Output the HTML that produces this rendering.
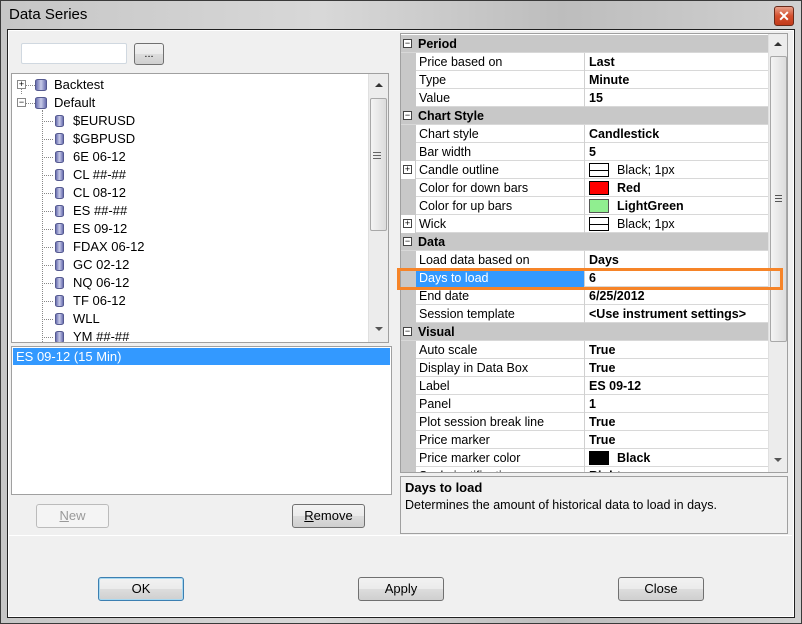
<!DOCTYPE html>
<html><head><style>
*{box-sizing:border-box;margin:0;padding:0}
body{width:802px;height:624px;overflow:hidden;background:#b4b4b4;font-family:"Liberation Sans",sans-serif;font-size:12.5px;color:#000;position:relative}
.abs{position:absolute}
.win{left:0;top:0;width:802px;height:624px;border:1px solid #3a3a3a;background:linear-gradient(90deg,#c6c6c6,#d8d8d8 40%,#bdbdbd 70%,#d0d0d0)}
.client{left:7px;top:29px;width:788px;height:589px;background:#f0f0f0;border:1px solid #202020;box-shadow:inset 0 0 0 1px #fff}
.btn{border:1px solid #707070;border-radius:3px;background:linear-gradient(#f2f2f2,#ebebeb 50%,#dddddd 50%,#cfcfcf);text-align:center;font-size:13px;line-height:21px}
.tree div{position:absolute;height:18px;line-height:18px;white-space:nowrap}
.db{position:absolute;top:3px;width:9px;height:12px;border-radius:3px/2px;background:linear-gradient(90deg,#6a6fb0,#c8cbe8 50%,#6a6fb0);border:1px solid #555a90}
.dots{position:absolute;top:9px;height:1px;border-top:1px dotted #888}
.tg{position:absolute;top:4px;left:5px;width:9px;height:9px;border:1px solid #888;font-size:9px;line-height:7px;text-align:center;background:#fff}
.pg{left:400px;top:33px;width:388px;height:440px;border:1px solid #a0a0a0;background:#fff;overflow:hidden}
.pr{position:absolute;left:0;width:367px;height:18px;line-height:19px;border-bottom:1px solid #d8d8d8}
.pr .n{position:absolute;left:14px;width:170px;height:18px;padding-left:3px;border-left:1px solid #c8c8c8;border-right:1px solid #d0d0d0}
.pr .v{position:absolute;left:185px;padding-left:3px;font-weight:bold;white-space:nowrap}
.pr.c{background:#c8c8c8;font-weight:bold}
.pr.c .n{border:none;left:14px}
.gut{position:absolute;left:0;top:0;width:14px;height:18px;background:#c8c8c8}
.pm{position:absolute;left:2px;top:4px;width:9px;height:9px;border:1px solid #444;font-size:9px;line-height:7px;text-align:center;font-weight:normal;background:#fff}
.sw{display:inline-block;width:20px;height:14px;border:1px solid #000;vertical-align:-3px;margin-right:8px}
</style></head><body>
<div class="abs win"></div>
<div class="abs" style="left:9px;top:6px;font-size:15px">Data Series</div>
<div class="abs" style="left:774px;top:6px;width:20px;height:20px;border:1px solid #6a2a1a;border-radius:3px;background:linear-gradient(#e8a08a,#d4502e 50%,#c23a1a);color:#fff;font-weight:bold;text-align:center;line-height:18px;font-size:14px">✕</div>
<div class="abs client"></div>

<!-- left -->
<div class="abs" style="left:21px;top:43px;width:106px;height:21px;border:1px solid #d0d8e0;background:#fff;border-radius:2px"></div>
<div class="abs btn" style="left:134px;top:43px;width:30px;height:22px;line-height:20px;font-size:11px">...</div>
<div class="abs" style="left:11px;top:73px;width:378px;height:270px;border:1px solid #a0a0a0;background:#fff;overflow:hidden;font-size:13px">
 <div class="tree">
  <div style="left:0;top:2px;width:200px"><span class="tg">+</span><span class="dots" style="left:14px;width:9px"></span><span class="db" style="left:23px;width:12px"></span><span style="position:absolute;left:42px">Backtest</span></div>
  <div style="left:0;top:20px;width:200px"><span class="tg">−</span><span class="dots" style="left:14px;width:9px"></span><span class="db" style="left:23px;width:12px"></span><span style="position:absolute;left:42px">Default</span></div>
  <div style="left:9px;top:14px;width:1px;height:6px;border-left:1px dotted #888"></div>
  <div style="left:30px;top:36px;width:1px;height:232px;border-left:1px dotted #888"></div>
 </div>
 <div class="tree" id="kids"></div>
 <div class="abs" style="left:356px;top:0;width:20px;height:268px;background:#ececec;border-left:1px solid #e0e0e0">
  <div class="abs" style="left:6px;top:9px;border:4px solid transparent;border-bottom:4px solid #333;border-top:0"></div>
  <div class="abs" style="left:1px;top:24px;width:17px;height:133px;border:1px solid #a8a8a8;border-radius:2px;background:linear-gradient(90deg,#f4f4f4,#dcdcdc)"></div>
  <div class="abs" style="left:4px;top:78px;width:8px;height:7px;border-top:1px solid #666;border-bottom:1px solid #666"></div>
  <div class="abs" style="left:4px;top:81px;width:8px;height:1px;background:#666"></div>
  <div class="abs" style="left:6px;top:253px;border:4px solid transparent;border-top:4px solid #555;border-bottom:0"></div>
 </div>
</div>
<div class="abs" style="left:11px;top:346px;width:381px;height:149px;border:1px solid #a0a0a0;background:#fff;font-size:13px">
 <div class="abs" style="left:1px;top:1px;width:377px;height:17px;background:#3399ff;color:#fff;line-height:17px;padding-left:3px">ES 09-12 (15 Min)</div>
</div>
<div class="abs btn" style="left:36px;top:504px;width:73px;height:24px;color:#999;border-color:#bbb;background:#f4f4f4"><u>N</u>ew</div>
<div class="abs btn" style="left:292px;top:504px;width:73px;height:24px"><u>R</u>emove</div>
<div class="abs" style="left:9px;top:535px;width:783px;height:1px;background:#d8d8d8;border-bottom:1px solid #fff"></div>

<!-- right -->
<div class="abs pg">
 <div class="pr c" style="top:1px"><div class="pm">−</div><div class="n">Period</div></div>
 <div class="pr" style="top:19px"><div class="gut"></div><div class="n">Price based on</div><div class="v">Last</div></div>
 <div class="pr" style="top:37px"><div class="gut"></div><div class="n">Type</div><div class="v">Minute</div></div>
 <div class="pr" style="top:55px"><div class="gut"></div><div class="n">Value</div><div class="v">15</div></div>
 <div class="pr c" style="top:73px"><div class="pm">−</div><div class="n">Chart Style</div></div>
 <div class="pr" style="top:91px"><div class="gut"></div><div class="n">Chart style</div><div class="v">Candlestick</div></div>
 <div class="pr" style="top:109px"><div class="gut"></div><div class="n">Bar width</div><div class="v">5</div></div>
 <div class="pr" style="top:127px"><div class="gut" style="background:#fff"></div><div class="pm">+</div><div class="n">Candle outline</div><div class="v" style="font-weight:normal"><span class="sw" style="background:linear-gradient(#fff 6px,#000 6px,#000 7px,#fff 7px)"></span>Black; 1px</div></div>
 <div class="pr" style="top:145px"><div class="gut"></div><div class="n">Color for down bars</div><div class="v"><span class="sw" style="background:#f00"></span>Red</div></div>
 <div class="pr" style="top:163px"><div class="gut"></div><div class="n">Color for up bars</div><div class="v"><span class="sw" style="background:#90ee90;border-color:#555"></span>LightGreen</div></div>
 <div class="pr" style="top:181px"><div class="gut" style="background:#fff"></div><div class="pm">+</div><div class="n">Wick</div><div class="v" style="font-weight:normal"><span class="sw" style="background:linear-gradient(#fff 6px,#000 6px,#000 7px,#fff 7px)"></span>Black; 1px</div></div>
 <div class="pr c" style="top:199px"><div class="pm">−</div><div class="n">Data</div></div>
 <div class="pr" style="top:217px"><div class="gut"></div><div class="n">Load data based on</div><div class="v">Days</div></div>
 <div class="pr" style="top:235px"><div class="gut"></div><div class="n" style="background:#3399ff;color:#fff">Days to load</div><div class="v">6</div></div>
 <div class="pr" style="top:253px"><div class="gut"></div><div class="n">End date</div><div class="v">6/25/2012</div></div>
 <div class="pr" style="top:271px"><div class="gut"></div><div class="n">Session template</div><div class="v">&lt;Use instrument settings&gt;</div></div>
 <div class="pr c" style="top:289px"><div class="pm">−</div><div class="n">Visual</div></div>
 <div class="pr" style="top:307px"><div class="gut"></div><div class="n">Auto scale</div><div class="v">True</div></div>
 <div class="pr" style="top:325px"><div class="gut"></div><div class="n">Display in Data Box</div><div class="v">True</div></div>
 <div class="pr" style="top:343px"><div class="gut"></div><div class="n">Label</div><div class="v">ES 09-12</div></div>
 <div class="pr" style="top:361px"><div class="gut"></div><div class="n">Panel</div><div class="v">1</div></div>
 <div class="pr" style="top:379px"><div class="gut"></div><div class="n">Plot session break line</div><div class="v">True</div></div>
 <div class="pr" style="top:397px"><div class="gut"></div><div class="n">Price marker</div><div class="v">True</div></div>
 <div class="pr" style="top:415px"><div class="gut"></div><div class="n">Price marker color</div><div class="v"><span class="sw" style="background:#000"></span>Black</div></div>
 <div class="pr" style="top:433px"><div class="gut"></div><div class="n">Scale justification</div><div class="v">Right</div></div>
 <div class="abs" style="left:367px;top:0;width:19px;height:438px;background:#ececec;border-left:1px solid #e0e0e0">
  <div class="abs" style="left:5px;top:8px;border:4px solid transparent;border-bottom:4px solid #333;border-top:0"></div>
  <div class="abs" style="left:1px;top:22px;width:17px;height:286px;border:1px solid #a8a8a8;border-radius:2px;background:linear-gradient(90deg,#f4f4f4,#dcdcdc)"><div class="abs" style="left:4px;top:138px;width:7px;height:7px;border-top:1px solid #555;border-bottom:1px solid #555"></div><div class="abs" style="left:4px;top:141px;width:7px;height:1px;background:#555"></div></div>
  <div class="abs" style="left:5px;top:424px;border:4px solid transparent;border-top:4px solid #555;border-bottom:0"></div>
 </div>
</div>
<div class="abs" style="left:397px;top:268px;width:386px;height:22px;border:3px solid #f68428"></div>
<div class="abs" style="left:400px;top:476px;width:388px;height:58px;border:1px solid #a0a0a0;background:#f0f0f0">
 <div class="abs" style="left:4px;top:3px;font-weight:bold;font-size:13px">Days to load</div>
 <div class="abs" style="left:4px;top:21px;font-size:12.5px">Determines the amount of historical data to load in days.</div>
</div>

<div class="abs btn" style="left:98px;top:577px;width:86px;height:24px;border-color:#3c7fb1;box-shadow:inset 0 0 0 1px #a8d8f0">OK</div>
<div class="abs btn" style="left:358px;top:577px;width:86px;height:24px">Apply</div>
<div class="abs btn" style="left:618px;top:577px;width:86px;height:24px">Close</div>

<div class="abs" style="left:12px;top:74px;width:356px;height:268px;overflow:hidden;font-size:13px">
 <div class="tree">
  <div style="left:30px;top:38px;width:300px"><span class="dots" style="left:0;width:11px"></span><span class="db" style="left:13px"></span><span style="position:absolute;left:31px">$EURUSD</span></div>
  <div style="left:30px;top:56px;width:300px"><span class="dots" style="left:0;width:11px"></span><span class="db" style="left:13px"></span><span style="position:absolute;left:31px">$GBPUSD</span></div>
  <div style="left:30px;top:74px;width:300px"><span class="dots" style="left:0;width:11px"></span><span class="db" style="left:13px"></span><span style="position:absolute;left:31px">6E 06-12</span></div>
  <div style="left:30px;top:92px;width:300px"><span class="dots" style="left:0;width:11px"></span><span class="db" style="left:13px"></span><span style="position:absolute;left:31px">CL ##-##</span></div>
  <div style="left:30px;top:110px;width:300px"><span class="dots" style="left:0;width:11px"></span><span class="db" style="left:13px"></span><span style="position:absolute;left:31px">CL 08-12</span></div>
  <div style="left:30px;top:128px;width:300px"><span class="dots" style="left:0;width:11px"></span><span class="db" style="left:13px"></span><span style="position:absolute;left:31px">ES ##-##</span></div>
  <div style="left:30px;top:146px;width:300px"><span class="dots" style="left:0;width:11px"></span><span class="db" style="left:13px"></span><span style="position:absolute;left:31px">ES 09-12</span></div>
  <div style="left:30px;top:164px;width:300px"><span class="dots" style="left:0;width:11px"></span><span class="db" style="left:13px"></span><span style="position:absolute;left:31px">FDAX 06-12</span></div>
  <div style="left:30px;top:182px;width:300px"><span class="dots" style="left:0;width:11px"></span><span class="db" style="left:13px"></span><span style="position:absolute;left:31px">GC 02-12</span></div>
  <div style="left:30px;top:200px;width:300px"><span class="dots" style="left:0;width:11px"></span><span class="db" style="left:13px"></span><span style="position:absolute;left:31px">NQ 06-12</span></div>
  <div style="left:30px;top:218px;width:300px"><span class="dots" style="left:0;width:11px"></span><span class="db" style="left:13px"></span><span style="position:absolute;left:31px">TF 06-12</span></div>
  <div style="left:30px;top:236px;width:300px"><span class="dots" style="left:0;width:11px"></span><span class="db" style="left:13px"></span><span style="position:absolute;left:31px">WLL</span></div>
  <div style="left:30px;top:254px;width:300px"><span class="dots" style="left:0;width:11px"></span><span class="db" style="left:13px"></span><span style="position:absolute;left:31px">YM ##-##</span></div>
 </div>
</div>
</body></html>
